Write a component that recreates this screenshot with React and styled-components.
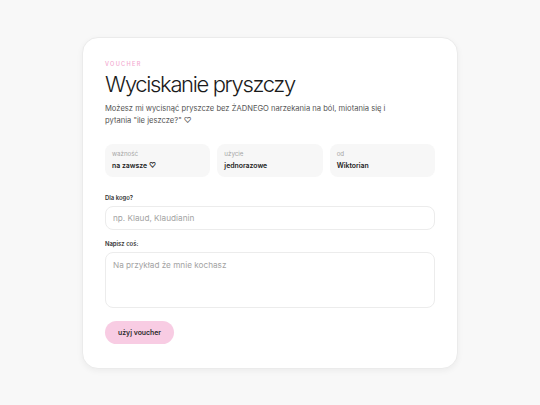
import React from 'react'
import styled, { createGlobalStyle } from 'styled-components'

const GlobalStyle = createGlobalStyle`
  html, body {
    margin: 0;
    padding: 0;
    background: #f8f8f8;
    font-family: Inter, "Noto Sans", sans-serif;
    color: #1c1c1c;
  }
  * { box-sizing: border-box; }
`

const Page = styled.div`
  min-height: 100vh;
  display: flex;
  align-items: center;
  justify-content: center;
`

const Card = styled.div`
  width: 376px;
  background: #fff;
  border: 1px solid #ebebeb;
  border-radius: 16px;
  box-shadow: 0 2px 6px rgba(0, 0, 0, 0.05);
  padding: 22px 22px 24px;
  display: flex;
  flex-direction: column;
`

const Eyebrow = styled.div`
  font-size: 5.6px;
  line-height: 8px;
  letter-spacing: 1.3px;
  color: #f3a9d0;
  font-weight: 500;
  text-transform: uppercase;
`

const Title = styled.h1`
  margin: 3px 0 0;
  font-size: 22px;
  line-height: 26px;
  font-weight: 300;
  letter-spacing: -1.35px;
  color: #1a1a1a;
`

const Lead = styled.p`
  margin: 6px 0 0;
  max-width: 300px;
  font-size: 7.6px;
  line-height: 12.5px;
  color: #555;
`

const Stats = styled.div`
  margin-top: 16px;
  display: grid;
  grid-template-columns: repeat(3, 1fr);
  gap: 7px;
`

const Stat = styled.div`
  background: #f7f7f7;
  border-radius: 8px;
  padding: 6px 7px 7px;
  display: flex;
  flex-direction: column;
  gap: 3px;
`

const StatLabel = styled.span`
  font-size: 6.2px;
  line-height: 8px;
  color: #a6a6a6;
`

const StatValue = styled.span`
  font-size: 6.9px;
  line-height: 9px;
  font-weight: 600;
  color: #222;
`

const Field = styled.label`
  display: flex;
  flex-direction: column;
  gap: 4px;
  margin-top: ${p => p.$top}px;
`

const FieldLabel = styled.span`
  font-size: 5.9px;
  line-height: 8px;
  font-weight: 600;
  color: #333;
`

const Input = styled.input`
  height: 24px;
  border: 1px solid #ececec;
  border-radius: 8px;
  padding: 0 7px;
  font: inherit;
  font-size: 8.2px;
  outline: none;
  &::placeholder { color: #a3a3a3; }
`

const TextArea = styled.textarea`
  height: 56px;
  border: 1px solid #ececec;
  border-radius: 8px;
  padding: 7px 7px;
  font: inherit;
  font-size: 8.2px;
  line-height: 11px;
  resize: none;
  outline: none;
  &::placeholder { color: #a3a3a3; }
`

const Button = styled.button`
  margin-top: 13px;
  align-self: flex-start;
  height: 23px;
  padding: 0 13px;
  border: none;
  border-radius: 999px;
  background: #f8cce3;
  color: #2b2b2b;
  font: inherit;
  font-size: 6.9px;
  font-weight: 600;
`

const stats = [
  { label: 'ważność', value: 'na zawsze ♡' },
  { label: 'użycie', value: 'jednorazowe' },
  { label: 'od', value: 'Wiktorian' },
]

const App = () => {
  return (
    <>
      <GlobalStyle />
      <Page>
        <Card>
          <Eyebrow>Voucher</Eyebrow>
          <Title>Wyciskanie pryszczy</Title>
          <Lead>
            Możesz mi wycisnąć pryszcze bez ŻADNEGO narzekania na ból, miotania się i pytania "ile jeszcze?" ♡
          </Lead>

          <Stats>
            {stats.map(s => (
              <Stat key={s.label}>
                <StatLabel>{s.label}</StatLabel>
                <StatValue>{s.value}</StatValue>
              </Stat>
            ))}
          </Stats>

          <Field $top={17}>
            <FieldLabel>Dla kogo?</FieldLabel>
            <Input placeholder="np. Klaud, Klaudianin" />
          </Field>

          <Field $top={10}>
            <FieldLabel>Napisz coś:</FieldLabel>
            <TextArea placeholder="Na przykład że mnie kochasz" />
          </Field>

          <Button>użyj voucher</Button>
        </Card>
      </Page>
    </>
  )
}

export default App
